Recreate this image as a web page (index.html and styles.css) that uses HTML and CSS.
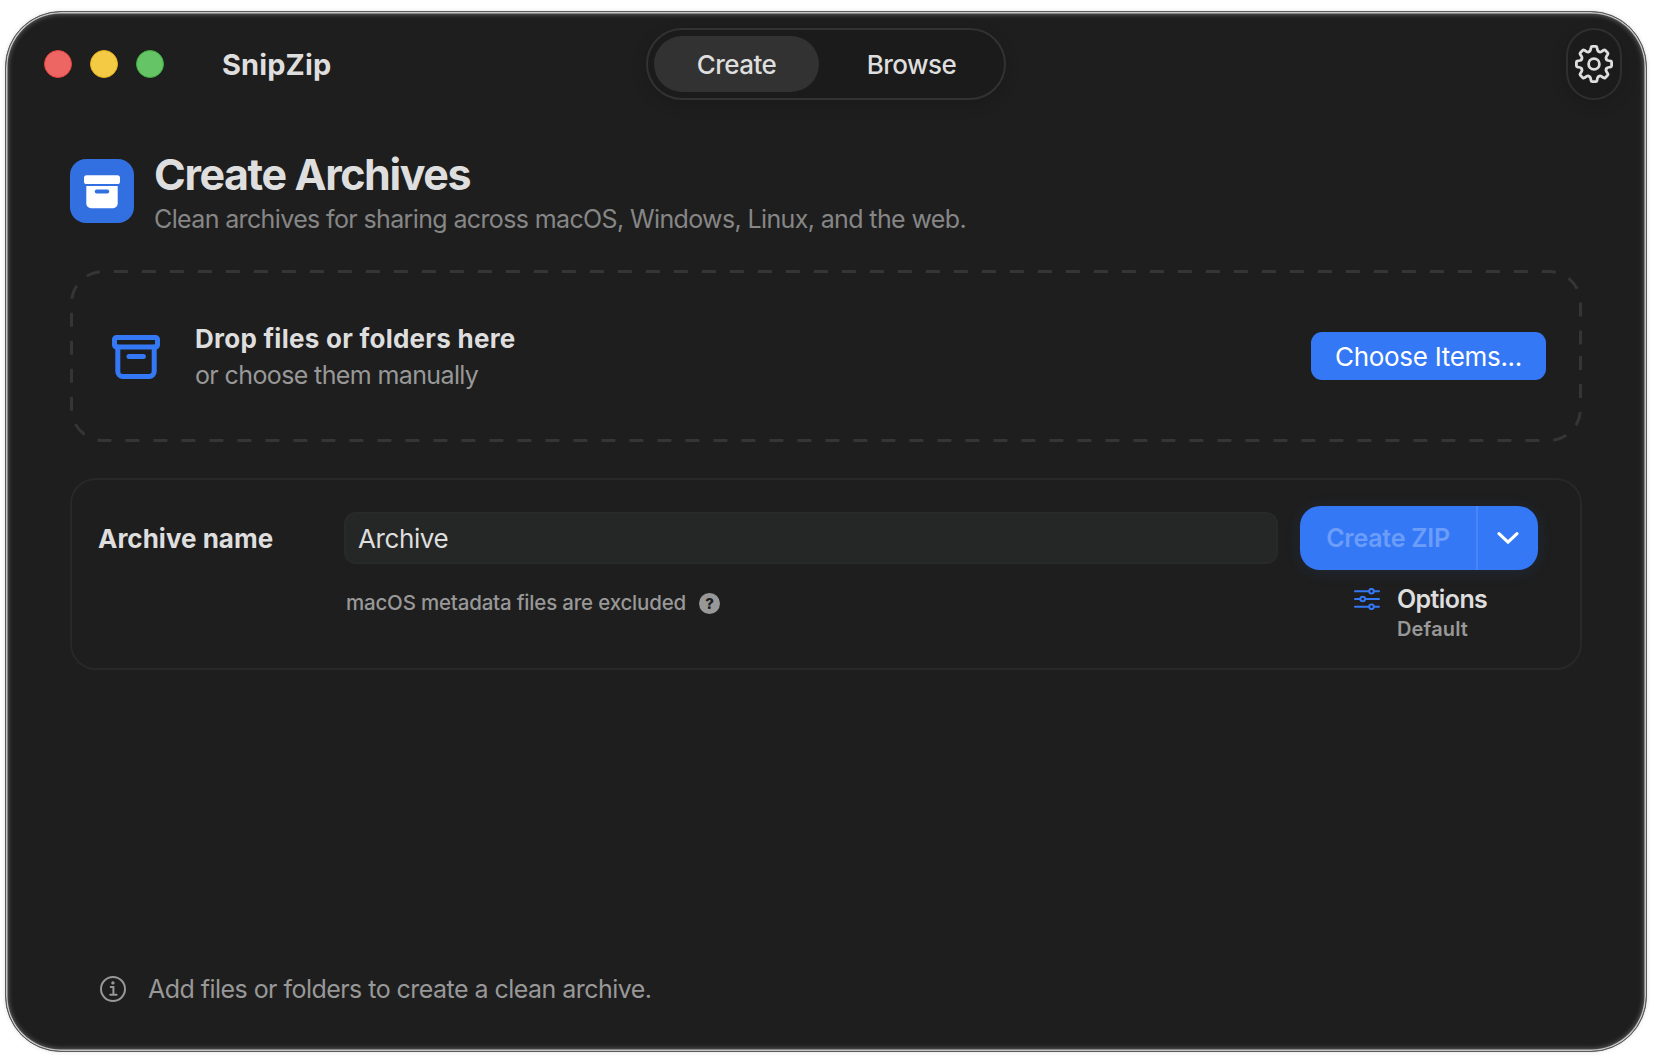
FILE: index.html
```html
<!DOCTYPE html>
<html lang="en">
<head>
  <meta charset="UTF-8">
  <title>SnipZip</title>
  <link rel="stylesheet" href="styles.css">
</head>
<body>

  <div class="window">
    <header class="titlebar">
      <div class="titlebar-left">
        <span class="light light-close"></span>
        <span class="light light-minimize"></span>
        <span class="light light-zoom"></span>
        <span class="app-name">SnipZip</span>
      </div>

      <nav class="tabs">
        <button class="tab active">Create</button>
        <button class="tab">Browse</button>
      </nav>

      <button class="settings" aria-label="Settings">
        <svg width="40" height="40" viewBox="-20 -20 40 40">
          <defs>
            <path id="tooth" d="M-5.05-12.2C-4.2-12.5-3.7-13-3.5-14L-3-16.4Q-2.8-17.6-1.7-17.6H1.7Q2.8-17.6 3-16.4L3.5-14C3.7-13 4.2-12.5 5.05-12.2"/>
          </defs>
          <use href="#tooth"/>
          <use href="#tooth" transform="rotate(45)"/>
          <use href="#tooth" transform="rotate(90)"/>
          <use href="#tooth" transform="rotate(135)"/>
          <use href="#tooth" transform="rotate(180)"/>
          <use href="#tooth" transform="rotate(225)"/>
          <use href="#tooth" transform="rotate(270)"/>
          <use href="#tooth" transform="rotate(315)"/>
          <circle r="5.4"/>
        </svg>
      </button>
    </header>

    <main>
      <section class="intro">
        <div class="intro-icon">
          <svg width="36" height="34" viewBox="0 0 36 34">
            <rect x="0" y="0.3" width="36" height="8.7" rx="2.6" fill="#fff"/>
            <path d="M2.3 11h31.4v17.6a4.6 4.6 0 0 1-4.6 4.6H6.9a4.6 4.6 0 0 1-4.6-4.6z" fill="#fff"/>
            <rect x="10.8" y="14.6" width="14.4" height="3.8" rx="1.9" fill="#3270e2"/>
          </svg>
        </div>
        <div>
          <h1>Create Archives</h1>
          <p class="subtitle">Clean archives for sharing across macOS, Windows, Linux, and the web.</p>
        </div>
      </section>

      <section class="dropzone">
        <svg class="dropzone-border" width="1512" height="172" viewBox="0 0 1512 172">
          <path d="M1510.5 86V139A31.5 31.5 0 0 1 1479 170.5H33A31.5 31.5 0 0 1 1.5 139V33A31.5 31.5 0 0 1 33 1.5H1479A31.5 31.5 0 0 1 1510.5 33V86"/>
        </svg>
        <svg class="dropzone-icon" width="48" height="44" viewBox="0 0 48 44">
          <rect x="2.5" y="2.5" width="43" height="9.6" rx="2"/>
          <path d="M5.8 12v24.5a5 5 0 0 0 5 5h26.4a5 5 0 0 0 5-5V12M17 21.5h14.4"/>
        </svg>
        <div class="dropzone-text">
          <h2>Drop files or folders here</h2>
          <p>or choose them manually</p>
        </div>
        <button class="choose">Choose Items...</button>
      </section>

      <section class="card">
        <label for="archiveName">Archive name</label>
        <input id="archiveName" type="text" value="Archive">
        <div class="create">
          <button class="create-main" disabled>Create ZIP</button>
          <button class="create-menu" aria-label="Format">
            <svg width="24" height="16" viewBox="0 0 24 16">
              <path d="M3 3.6l9 8.6 9-8.6"/>
            </svg>
          </button>
        </div>

        <div class="note">
          <span>macOS metadata files are excluded</span>
          <span class="help">?</span>
        </div>

        <div class="options">
          <svg width="26" height="22" viewBox="0 0 26 22">
            <path d="M1 3.2h13.4M20.6 3.2h4.4M1 11h4.8M12 11h13M1 18.8h13.4M20.6 18.8h4.4"/>
            <circle cx="17.5" cy="3.2" r="2.3"/>
            <circle cx="8.7" cy="11" r="2.3"/>
            <circle cx="17.5" cy="18.8" r="2.3"/>
          </svg>
          <div>
            <div class="options-title">Options</div>
            <div class="options-value">Default</div>
          </div>
        </div>
      </section>

      <footer class="status">
        <svg width="26" height="26" viewBox="0 0 26 26">
          <circle cx="13" cy="13" r="12"/>
          <path d="M10.7 11h2.7v7.6M10.2 18.8h6.4"/>
          <circle class="dot" cx="12.9" cy="6.9" r="1.7"/>
        </svg>
        <span>Add files or folders to create a clean archive.</span>
      </footer>
    </main>
  </div>

</body>
</html>
```
FILE: styles.css
```css
* {
  box-sizing: border-box;
}

body {
  margin: 0;
  padding: 11px 7px 10px 5px;
  height: 1062px;
  background: #fff;
  font-family: Inter, "Liberation Sans", sans-serif;
  color: #dedede;
  overflow: hidden;
}

h1, h2, p {
  margin: 0;
}

button, input {
  font-family: inherit;
  color: inherit;
  border: none;
  background: none;
  padding: 0;
}

svg {
  display: block;
  fill: none;
  flex-shrink: 0;
}

.window {
  height: 1041px;
  display: flex;
  flex-direction: column;
  background: #1e1e1e;
  border: 1px solid #5a5a5a;
  border-radius: 56px;
  box-shadow: inset 0 0 0 1.5px #c4c4c4, inset 0 0 5px 2px #686868, 0 0 4px rgba(0, 0, 0, 0.12);
}

/* title bar */

.titlebar {
  display: grid;
  grid-template-columns: 1fr auto 1fr;
  align-items: center;
  height: 88px;
  padding: 16px 24px 0 38px;
}

.titlebar-left {
  display: flex;
  align-items: center;
  gap: 18px;
}

.light {
  width: 28px;
  height: 28px;
  border-radius: 50%;
}

.light-close {
  background: #ee6664;
  border: 1px solid #e2453f;
}

.light-minimize {
  background: #f4c944;
  border: 1px solid #e5b422;
}

.light-zoom {
  background: #65c466;
  border: 1px solid #3fae41;
}

.app-name {
  margin-left: 40px;
  font-size: 29px;
  font-weight: 650;
  letter-spacing: 0.1px;
}

.tabs {
  display: flex;
  width: 360px;
  height: 72px;
  padding: 6px 0 6px 6px;
  margin-right: 14px;
  background: #1b1b1b;
  border: 2px solid #323232;
  border-radius: 36px;
  box-shadow: 0 4px 16px rgba(0, 0, 0, 0.15);
}

.tab {
  flex: 1;
  height: 56px;
  border-radius: 28px;
  font-size: 26px;
  font-weight: 500;
  letter-spacing: -0.55px;
}

.tab.active {
  flex: 0 0 165px;
  background: #323232;
}

.settings {
  justify-self: end;
  display: flex;
  align-items: center;
  justify-content: center;
  width: 56px;
  height: 72px;
  background: #1b1b1b;
  border: 2px solid #2f2f2f;
  border-radius: 28px;
  box-shadow: 0 4px 16px rgba(0, 0, 0, 0.15);
}

.settings svg {
  stroke: #dedede;
  stroke-width: 2.8;
  stroke-linecap: round;
  stroke-linejoin: round;
}

/* content */

main {
  flex: 1;
  display: flex;
  flex-direction: column;
  padding: 52px 64px 46px;
}

.intro {
  display: flex;
  gap: 20px;
}

.intro-icon {
  display: flex;
  align-items: center;
  justify-content: center;
  width: 64px;
  height: 64px;
  margin-top: 7px;
  padding-top: 1px;
  background: #3270e2;
  border-radius: 16px;
}

h1 {
  font-size: 43px;
  font-weight: 650;
  line-height: 45px;
  letter-spacing: -1.42px;
}

.subtitle {
  margin-top: 6px;
  font-size: 25px;
  line-height: 32px;
  letter-spacing: -0.63px;
  color: #868686;
}

.dropzone {
  position: relative;
  display: flex;
  align-items: center;
  height: 172px;
  margin-top: 35px;
  padding: 0 36px 0 42px;
}

.dropzone-border {
  position: absolute;
  top: 0;
  left: 0;
  stroke: #353535;
  stroke-width: 3;
  stroke-dasharray: 14 14;
}

.dropzone-icon {
  margin-top: 2px;
  stroke: #3478f6;
  stroke-width: 5;
  stroke-linecap: round;
}

.dropzone-text {
  margin-left: 35px;
  padding-top: 1px;
  line-height: 36px;
}

.dropzone-text h2 {
  font-size: 26px;
  font-weight: 700;
  letter-spacing: 0.26px;
}

.dropzone-text p {
  font-size: 25px;
  letter-spacing: -0.62px;
  color: #989898;
}

.choose {
  width: 235px;
  height: 48px;
  margin-left: auto;
  background: #3478f6;
  border-radius: 11px;
  font-size: 26px;
  letter-spacing: -0.3px;
  color: #fff;
}

.card {
  display: grid;
  grid-template-columns: 246px 1fr 238px;
  grid-template-rows: 64px auto;
  align-items: center;
  height: 192px;
  margin-top: 36px;
  padding: 26px 42px 0 26px;
  border: 2px solid #282828;
  border-radius: 26px;
}

.card label {
  font-size: 26px;
  font-weight: 700;
}

.card input {
  width: 934px;
  height: 52px;
  padding: 0 12px;
  background: #252726;
  border: 2px solid #282929;
  border-radius: 12px;
  font-size: 26px;
  letter-spacing: -0.4px;
}

.create {
  display: flex;
  height: 64px;
  background: #3478f6;
  border-radius: 20px;
  box-shadow: 0 2px 16px rgba(52, 120, 246, 0.12);
}

.create-main {
  width: 178px;
  border-right: 2px solid #4a86f7;
  font-size: 25px;
  font-weight: 600;
  letter-spacing: -0.25px;
  color: #6b9df9;
}

.create-menu {
  flex: 1;
  display: flex;
  align-items: center;
  justify-content: center;
}

.create-menu svg {
  stroke: #fff;
  stroke-width: 3.2;
  stroke-linecap: round;
  stroke-linejoin: round;
}

.note {
  grid-column: 2;
  align-self: start;
  display: flex;
  align-items: center;
  gap: 13px;
  margin: 18px 0 0 2px;
  font-size: 20.5px;
  font-weight: 500;
  line-height: 30px;
  letter-spacing: -0.19px;
  color: #989898;
}

.help {
  width: 21px;
  height: 21px;
  border-radius: 50%;
  background: #989898;
  color: #1e1e1e;
  font-size: 15px;
  font-weight: 800;
  line-height: 21px;
  letter-spacing: 0;
  text-align: center;
}

.options {
  align-self: start;
  display: flex;
  align-items: flex-start;
  gap: 17px;
  padding: 15px 0 0 54px;
}

.options svg {
  margin-top: 3px;
  stroke: #3478f6;
  stroke-width: 2;
  stroke-linecap: round;
}

.options-title {
  font-size: 25px;
  font-weight: 600;
  line-height: 28px;
  letter-spacing: -0.6px;
}

.options-value {
  font-size: 20px;
  font-weight: 600;
  line-height: 32px;
  letter-spacing: 0.15px;
  color: #989898;
}

.status {
  display: flex;
  align-items: center;
  gap: 22px;
  height: 32px;
  margin-top: auto;
  padding-left: 30px;
  font-size: 25px;
  letter-spacing: -0.54px;
  color: #989898;
}

.status svg {
  stroke: #989898;
  stroke-width: 2;
  stroke-linecap: round;
}

.status .dot {
  fill: #989898;
  stroke: none;
}
```
